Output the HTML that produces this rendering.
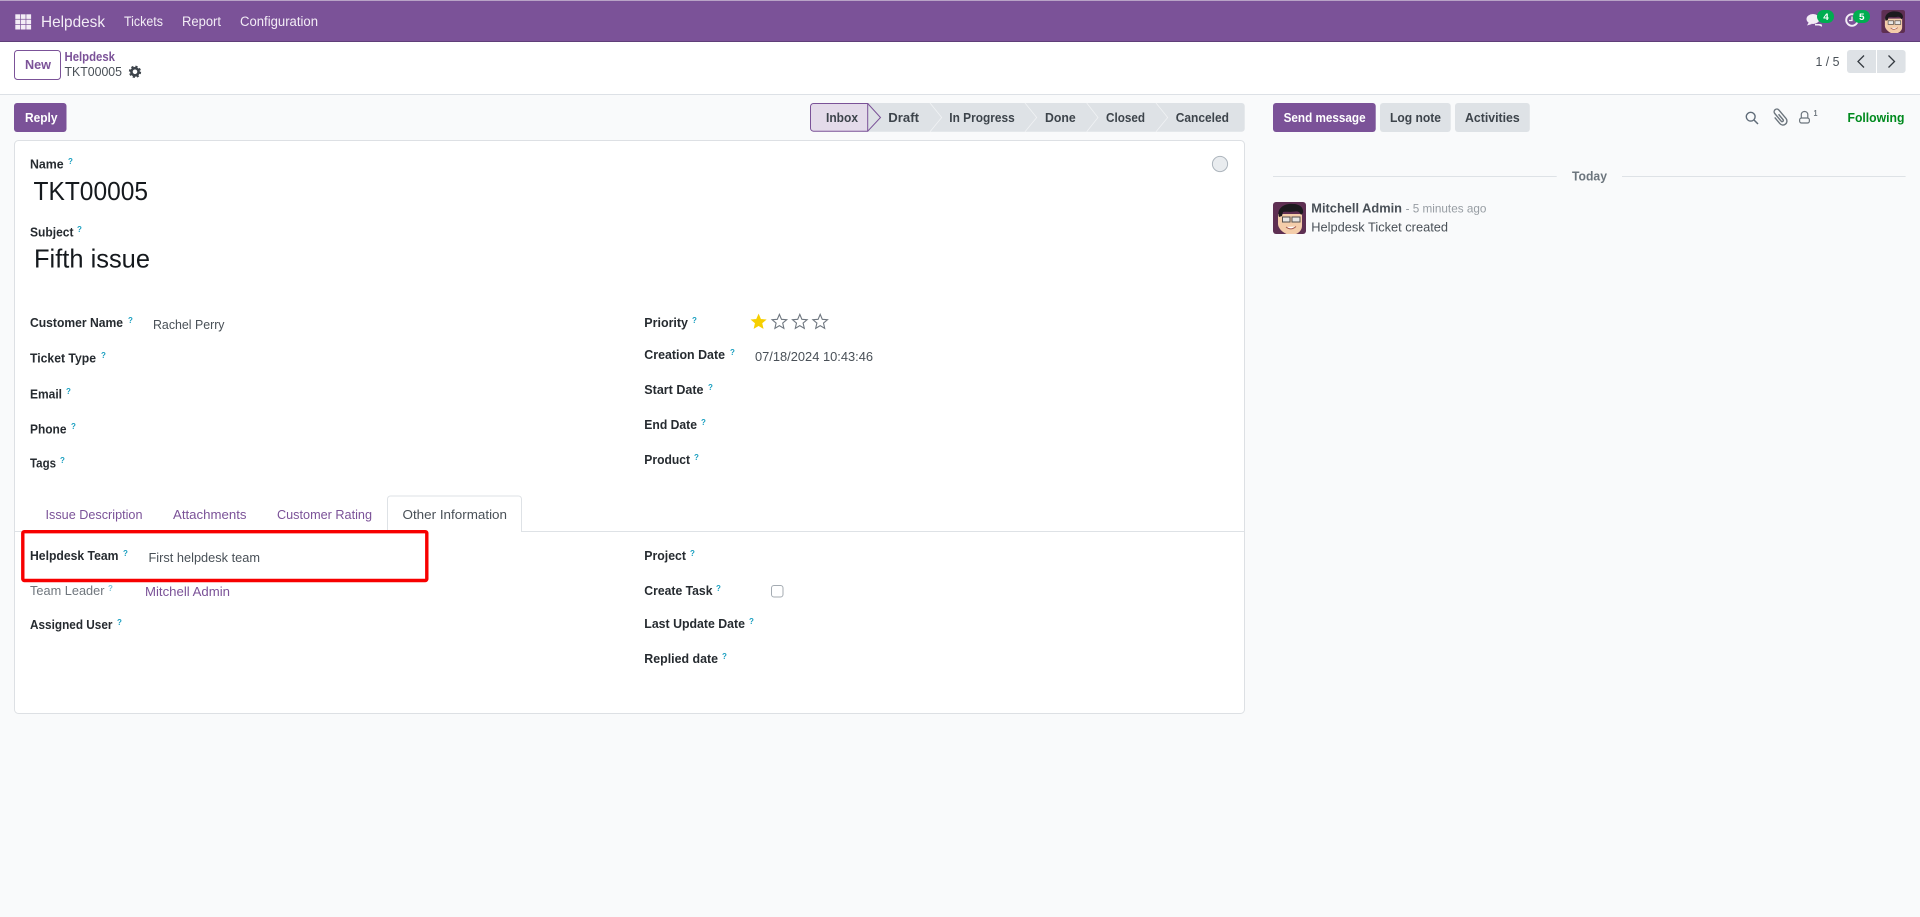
<!DOCTYPE html>
<html lang="en"><head><meta charset="utf-8"><title>Helpdesk</title>
<style>
html,body{margin:0;padding:0;background:#f9fafb;width:1920px;height:917px;overflow:hidden}
svg{display:block;position:absolute;left:0;top:0}
text{font-family:"Liberation Sans",sans-serif;font-size:13px;fill:#495057}
.n{fill:#f3edf6;font-size:13.5px}
.l{fill:#262b30;font-weight:bold}
.g{fill:#6f767d}
.m{fill:#3d444b;font-weight:bold}
.p{fill:#7b5298}
.pb{fill:#7b5298;font-weight:bold}
.w{fill:#fff;font-weight:bold}
.q{font-size:8px;font-weight:bold;fill:#1a9fc0}
.b{font-size:26px;fill:#15191d}
</style></head><body>
<svg width="1920" height="917" viewBox="0 0 1920 917" xmlns="http://www.w3.org/2000/svg">
<defs>
<clipPath id="ac"><rect width="33" height="32" rx="3"/></clipPath>
<symbol id="av" viewBox="0 0 33 32"><g clip-path="url(#ac)">
<rect width="33" height="32" fill="#5e2f52"/>
<path d="M5 22V12h24v12c0 5-5 9-11 9S5 27 5 22z" fill="#f4cdaa"/>
<path d="M6 15C3 6 12 1 20 2c7 0 11 4 10 9l-2 2c-1-3-3-4-6-3.500-5 .7-9 0-12 .5l-1 4z" fill="#1c1a1e"/>
<rect x="9.500" y="15" width="7.500" height="5" fill="#e8e6e4" stroke="#55504e"/>
<rect x="19" y="15" width="8" height="5" fill="#e8e6e4" stroke="#55504e"/>
<path d="M13 25q5 4 10-.5" fill="#fff" stroke="#a55a50"/>
</g></symbol>
<path id="st" d="M0-7.600 2.100-2.700 7.300-2.300 3.300 1.100 4.500 6.300 0 3.600-4.500 6.300-3.300 1.100-7.300-2.300-2.100-2.700Z"/>
</defs>

<!-- top bar -->
<rect width="1920" height="42" fill="#7b5298"/>
<rect width="1920" height="1" fill="#b8a3c6"/>
<rect y="41" width="1920" height="1" fill="#5f3f78"/>
<g fill="#f3edf6">
<rect x="15.300" y="14.300" width="4.800" height="4.600"/><rect x="20.800" y="14.300" width="4.800" height="4.600"/><rect x="26.300" y="14.300" width="4.800" height="4.600"/>
<rect x="15.300" y="19.600" width="4.800" height="4.600"/><rect x="20.800" y="19.600" width="4.800" height="4.600"/><rect x="26.300" y="19.600" width="4.800" height="4.600"/>
<rect x="15.300" y="24.900" width="4.800" height="4.600"/><rect x="20.800" y="24.900" width="4.800" height="4.600"/><rect x="26.300" y="24.900" width="4.800" height="4.600"/>
</g>
<text x="41" y="27" class="n" style="font-size:16px" textLength="64" lengthAdjust="spacingAndGlyphs">Helpdesk</text>
<text x="124" y="26" class="n" textLength="39" lengthAdjust="spacingAndGlyphs">Tickets</text>
<text x="182" y="26" class="n" textLength="39" lengthAdjust="spacingAndGlyphs">Report</text>
<text x="240" y="26" class="n" textLength="78" lengthAdjust="spacingAndGlyphs">Configuration</text>

<!-- systray -->
<ellipse cx="1813" cy="19" rx="6.500" ry="5" fill="#f3edf6"/>
<path d="M1809 22l-2 3.500 5-1.500zM1815 24h5q2.500 0 2 2.700l-3-1.200h-4z" fill="#f3edf6"/>
<circle cx="1852" cy="20" r="5.800" fill="none" stroke="#f3edf6" stroke-width="1.900"/>
<path d="M1852 16.500v4h-3" fill="none" stroke="#f3edf6" stroke-width="1.300"/>
<rect x="1817" y="10" width="17" height="13" rx="6.500" fill="#00ad50"/>
<rect x="1853" y="10" width="17" height="13" rx="6.500" fill="#00ad50"/>
<text x="1823.300" y="20" style="font-size:9.500px;font-weight:bold;fill:#fff" textLength="5.500" lengthAdjust="spacingAndGlyphs">4</text>
<text x="1859" y="20" style="font-size:9.500px;font-weight:bold;fill:#fff" textLength="5.500" lengthAdjust="spacingAndGlyphs">5</text>
<use href="#av" x="1881.300" y="10" width="23.700" height="23"/>

<!-- control panel -->
<rect y="42" width="1920" height="52" fill="#fff"/>
<rect y="94" width="1920" height="1" fill="#dde1e6"/>
<rect x="14.500" y="50.500" width="46" height="29" rx="3" fill="#fff" stroke="#7b5298"/>
<text x="25" y="69" class="pb" textLength="26" lengthAdjust="spacingAndGlyphs">New</text>
<text x="64.500" y="61" class="pb" style="font-size:12.500px" textLength="50.500" lengthAdjust="spacingAndGlyphs">Helpdesk</text>
<text x="64.500" y="76" textLength="57.500" lengthAdjust="spacingAndGlyphs">TKT00005</text>
<circle cx="135" cy="71.800" r="3.600" fill="none" stroke="#3d444b" stroke-width="2.600"/>
<circle cx="135" cy="71.800" r="5.300" fill="none" stroke="#3d444b" stroke-width="1.700" stroke-dasharray="2.200 2"/>
<text x="1815.500" y="66" textLength="24" lengthAdjust="spacingAndGlyphs">1 / 5</text>
<rect x="1847" y="50" width="58.600" height="23" rx="3" fill="#dee2e6"/>
<rect x="1876" y="50" width="1" height="23" fill="#fff"/>
<path d="M1864 55.500l-6 6 6 6M1888.500 55.500l6 6-6 6" fill="none" stroke="#343a40" stroke-width="1.300"/>

<!-- reply -->
<rect x="14" y="103" width="52.500" height="29" rx="3" fill="#7b5298"/>
<text x="25" y="122" class="w" textLength="32.500" lengthAdjust="spacingAndGlyphs">Reply</text>

<!-- statusbar -->
<rect x="860" y="103" width="384.700" height="28.700" rx="3" fill="#dee2e6"/>
<path d="M867.700 103.500 880.500 117.500 867.700 131.200" fill="#dee2e6" stroke="#7b5298"/>
<path d="M867.700 103.500H813.500a3 3 0 0 0-3 3V128.200a3 3 0 0 0 3 3H867.700Z" fill="#e4dbea" stroke="#7b5298"/>
<g fill="none" stroke="#f1f3f5" stroke-width=".8">
<path d="M930 103 941.700 117.500 930 131.700"/>
<path d="M1025 103 1036.700 117.500 1025 131.700"/>
<path d="M1086.700 103 1098 117.500 1086.700 131.700"/>
<path d="M1156 103 1167.700 117.500 1156 131.700"/>
</g>
<text x="826" y="122" class="m" textLength="32" lengthAdjust="spacingAndGlyphs">Inbox</text>
<text x="888.300" y="122" class="m" textLength="30.700" lengthAdjust="spacingAndGlyphs">Draft</text>
<text x="949.300" y="122" class="m" textLength="65.400" lengthAdjust="spacingAndGlyphs">In Progress</text>
<text x="1045" y="122" class="m" textLength="30.700" lengthAdjust="spacingAndGlyphs">Done</text>
<text x="1106" y="122" class="m" textLength="39" lengthAdjust="spacingAndGlyphs">Closed</text>
<text x="1175.700" y="122" class="m" textLength="53.300" lengthAdjust="spacingAndGlyphs">Canceled</text>

<!-- chatter -->
<rect x="1273" y="103" width="102.700" height="29" rx="3" fill="#7b5298"/>
<text x="1283.600" y="122" class="w" textLength="82" lengthAdjust="spacingAndGlyphs">Send message</text>
<rect x="1380" y="103" width="70.700" height="29" rx="3" fill="#dee2e6"/>
<text x="1390" y="122" class="m" textLength="51" lengthAdjust="spacingAndGlyphs">Log note</text>
<rect x="1455" y="103" width="74.800" height="29" rx="3" fill="#dee2e6"/>
<text x="1465" y="122" class="m" textLength="54.700" lengthAdjust="spacingAndGlyphs">Activities</text>
<circle cx="1750.700" cy="116.700" r="4.400" fill="none" stroke="#5f6b78" stroke-width="1.400"/>
<path d="M1754 120l4 4" stroke="#5f6b78" stroke-width="1.500"/>
<path transform="translate(1779.700 117.200) rotate(-40)" d="M-4-3V5a4 4 0 0 0 8 0V-6a2.700 2.700 0 0 0-5.400 0V4a1.200 1.200 0 0 0 2.400 0V-3" fill="none" stroke="#6c757d" stroke-width="1.400"/>
<path d="M1801.300 118v-3.800a3.300 3.300 0 0 1 6.500 0V118" fill="none" stroke="#6c757d" stroke-width="1.200"/>
<rect x="1799.600" y="118" width="9.800" height="5" rx="2" fill="none" stroke="#6c757d" stroke-width="1.200"/>
<text x="1813.500" y="116" style="font-size:8.500px;fill:#6c757d;font-weight:bold" textLength="4" lengthAdjust="spacingAndGlyphs">1</text>
<text x="1847.500" y="122" style="fill:#008a1e;font-weight:bold" textLength="56.900" lengthAdjust="spacingAndGlyphs">Following</text>
<rect x="1273" y="176" width="283.700" height="1" fill="#dee2e6"/>
<rect x="1622" y="176" width="283.600" height="1" fill="#dee2e6"/>
<text x="1572" y="180.500" style="fill:#6c757d;font-weight:bold;font-size:12.500px" textLength="35" lengthAdjust="spacingAndGlyphs">Today</text>
<use href="#av" x="1273" y="202" width="33" height="32"/>
<text x="1311.300" y="212.700" style="fill:#495057;font-weight:bold" textLength="90.700" lengthAdjust="spacingAndGlyphs">Mitchell Admin</text>
<text x="1405.600" y="212.700" style="fill:#969ca2;font-size:12px" textLength="80.800" lengthAdjust="spacingAndGlyphs">- 5 minutes ago</text>
<text x="1311.300" y="231.700" textLength="136.700" lengthAdjust="spacingAndGlyphs">Helpdesk Ticket created</text>

<!-- sheet -->
<rect x="14.500" y="140.500" width="1230" height="573" rx="4" fill="#fff" stroke="#dde0e4"/>
<circle cx="1220" cy="164" r="7.600" fill="#e9ecef" stroke="#adb5bd"/>

<text x="30" y="168.700" class="l" textLength="33.700" lengthAdjust="spacingAndGlyphs">Name</text><text x="68" y="164" class="q">?</text>
<text x="33.500" y="200" class="b" textLength="114.500" lengthAdjust="spacingAndGlyphs">TKT00005</text>
<text x="30" y="236.700" class="l" textLength="43.500" lengthAdjust="spacingAndGlyphs">Subject</text><text x="77" y="232" class="q">?</text>
<text x="34" y="267.700" class="b" textLength="116" lengthAdjust="spacingAndGlyphs">Fifth issue</text>

<text x="30" y="327" class="l" textLength="93" lengthAdjust="spacingAndGlyphs">Customer Name</text><text x="128" y="323" class="q">?</text>
<text x="153" y="329" textLength="71.500" lengthAdjust="spacingAndGlyphs">Rachel Perry</text>
<text x="30" y="362.700" class="l" textLength="66" lengthAdjust="spacingAndGlyphs">Ticket Type</text><text x="101" y="358" class="q">?</text>
<text x="30" y="398.300" class="l" textLength="32" lengthAdjust="spacingAndGlyphs">Email</text><text x="66" y="394" class="q">?</text>
<text x="30" y="433.300" class="l" textLength="36.500" lengthAdjust="spacingAndGlyphs">Phone</text><text x="71" y="429" class="q">?</text>
<text x="30" y="467.700" class="l" textLength="26" lengthAdjust="spacingAndGlyphs">Tags</text><text x="60" y="463" class="q">?</text>

<text x="644.300" y="327" class="l" textLength="43.700" lengthAdjust="spacingAndGlyphs">Priority</text><text x="692" y="323" class="q">?</text>
<g transform="translate(758.600 322)"><use href="#st" fill="#f6cf00" stroke="#f6cf00" stroke-width=".6"/></g>
<g fill="#fff" stroke="#6f7780" stroke-width="1.100">
<g transform="translate(779.400 322)"><use href="#st"/></g>
<g transform="translate(799.800 322)"><use href="#st"/></g>
<g transform="translate(820.200 322)"><use href="#st"/></g>
</g>
<text x="644.300" y="359" class="l" textLength="80.700" lengthAdjust="spacingAndGlyphs">Creation Date</text><text x="730" y="355" class="q">?</text>
<text x="755" y="361" textLength="118" lengthAdjust="spacingAndGlyphs">07/18/2024 10:43:46</text>
<text x="644.300" y="394" class="l" textLength="59.200" lengthAdjust="spacingAndGlyphs">Start Date</text><text x="708" y="390" class="q">?</text>
<text x="644.300" y="429" class="l" textLength="52.700" lengthAdjust="spacingAndGlyphs">End Date</text><text x="701" y="425" class="q">?</text>
<text x="644.300" y="464" class="l" textLength="45.700" lengthAdjust="spacingAndGlyphs">Product</text><text x="694" y="460" class="q">?</text>

<!-- tabs -->
<rect x="15" y="531" width="1229" height="1" fill="#dee2e6"/>
<path d="M387.500 531.500V499a3 3 0 0 1 3-3H518.500a3 3 0 0 1 3 3V531.500" fill="#fff" stroke="#dee2e6"/>
<rect x="388" y="530" width="133" height="2" fill="#fff"/>
<text x="45.500" y="519" class="p" textLength="97" lengthAdjust="spacingAndGlyphs">Issue Description</text>
<text x="173" y="519" class="p" textLength="73.500" lengthAdjust="spacingAndGlyphs">Attachments</text>
<text x="277" y="519" class="p" textLength="95" lengthAdjust="spacingAndGlyphs">Customer Rating</text>
<text x="402.500" y="519" textLength="104.500" lengthAdjust="spacingAndGlyphs">Other Information</text>

<text x="30" y="560" class="l" textLength="88.500" lengthAdjust="spacingAndGlyphs">Helpdesk Team</text><text x="123" y="556" class="q">?</text>
<text x="148.500" y="562" textLength="111.500" lengthAdjust="spacingAndGlyphs">First helpdesk team</text>
<text x="30" y="595" class="g" textLength="74.500" lengthAdjust="spacingAndGlyphs">Team Leader</text><text x="108" y="591" class="q" style="fill:#7fc4d6">?</text>
<text x="145" y="596" class="p" textLength="85" lengthAdjust="spacingAndGlyphs">Mitchell Admin</text>
<text x="30" y="629" class="l" textLength="82.500" lengthAdjust="spacingAndGlyphs">Assigned User</text><text x="117" y="625" class="q">?</text>

<text x="644.300" y="560" class="l" textLength="41.700" lengthAdjust="spacingAndGlyphs">Project</text><text x="690" y="556" class="q">?</text>
<text x="644.300" y="595" class="l" textLength="68.200" lengthAdjust="spacingAndGlyphs">Create Task</text><text x="716" y="591" class="q">?</text>
<rect x="771.500" y="585.500" width="11.500" height="11.500" rx="2.500" fill="#fff" stroke="#a4abb2"/>
<text x="644.300" y="628" class="l" textLength="100.700" lengthAdjust="spacingAndGlyphs">Last Update Date</text><text x="749" y="624" class="q">?</text>
<text x="644.300" y="663" class="l" textLength="73.700" lengthAdjust="spacingAndGlyphs">Replied date</text><text x="722" y="659" class="q">?</text>

<!-- red highlight -->
<rect x="22.800" y="531.700" width="404" height="48.800" rx="1.500" fill="none" stroke="#f70000" stroke-width="3.400"/>
</svg>
</body></html>
